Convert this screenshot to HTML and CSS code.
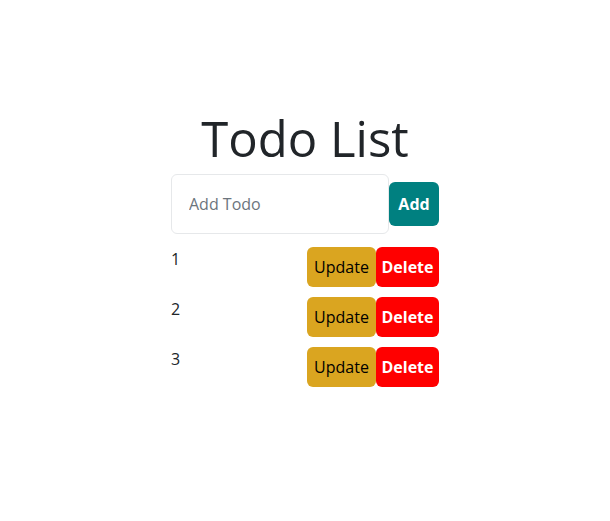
FILE: index.html
```html
<!DOCTYPE html>
<html lang="en">
<head>
<meta charset="utf-8">
<title>Todo List</title>
<link rel="stylesheet" href="styles.css">
</head>
<body>
<div class="app">
  <div class="todo">
    <h1 class="title">Todo List</h1>
    <div class="add-row">
      <input class="add-input" type="text" placeholder="Add Todo">
      <button class="btn btn-add">Add</button>
    </div>
    <ul class="list">
      <li class="item">
        <span class="item-text">1</span>
        <div class="actions">
          <button class="btn btn-update">Update</button>
          <button class="btn btn-delete">Delete</button>
        </div>
      </li>
      <li class="item">
        <span class="item-text">2</span>
        <div class="actions">
          <button class="btn btn-update">Update</button>
          <button class="btn btn-delete">Delete</button>
        </div>
      </li>
      <li class="item">
        <span class="item-text">3</span>
        <div class="actions">
          <button class="btn btn-update">Update</button>
          <button class="btn btn-delete">Delete</button>
        </div>
      </li>
    </ul>
  </div>
</div>
</body>
</html>
```

FILE: styles.css
```css
* { box-sizing: border-box; }
body {
  margin: 0;
  background: #fff;
  color: #212529;
  font-family: "Open Sans", "Noto Sans", sans-serif;
  font-size: 16px;
}
.app {
  display: flex;
  justify-content: center;
  padding-top: 108px;
}
.todo {
  width: 268px;
  display: flex;
  flex-direction: column;
}
.title {
  margin: 0 0 6px;
  text-align: center;
  font-size: 49px;
  font-weight: 500;
  line-height: 60px;
  color: #212529;
}
.add-row {
  display: flex;
  align-items: center;
  height: 60px;
  margin-bottom: 13px;
}
.add-input {
  width: 218px;
  height: 60px;
  border: 1px solid #e6e8ea;
  border-radius: 6px;
  padding: 0 17px;
  font-family: inherit;
  font-size: 16px;
  color: #212529;
  outline: none;
}
.add-input::placeholder { color: #6c757d; }
.btn {
  border: none;
  border-radius: 6px;
  height: 40px;
  padding: 0;
  font-family: inherit;
  font-size: 16px;
  cursor: pointer;
}
.btn-add {
  width: 50px;
  height: 44px;
  background: #008080;
  color: #fff;
  font-weight: 700;
}
.list {
  list-style: none;
  margin: 0;
  padding: 0;
}
.item {
  display: flex;
  justify-content: space-between;
  align-items: flex-start;
  margin-bottom: 10px;
}
.item-text {
  line-height: 24px;
}
.actions { display: flex; }
.btn-update {
  width: 69px;
  background: #daa520;
  color: #000;
  font-weight: 500;
}
.btn-delete {
  width: 63px;
  background: #ff0000;
  color: #fff;
  font-weight: 700;
}
```
